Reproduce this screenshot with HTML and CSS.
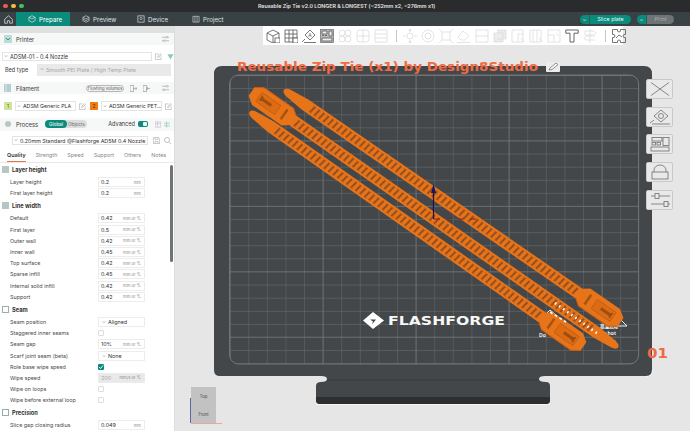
FILE: index.html
```html
<!DOCTYPE html>
<html lang="en">
<head>
<meta charset="utf-8">
<title>Reusable Zip Tie</title>
<link rel="stylesheet" href="styles.css">
</head>
<body>
<div class="app">
  <div class="titlebar">
    <div class="lights"><i class="light red"></i><i class="light yellow"></i><i class="light green"></i></div>
    <div class="title">Reusable Zip Tie v2.0 LONGER &amp; LONGEST (~252mm x2, ~276mm x1)</div>
  </div>
  <div class="tabbar">
    <div class="tab home"><svg width="9" height="9" viewBox="0 0 9 9"><path d="M.7 4.2 4.5.8l3.8 3.4v4H5.6V5.7H3.4v2.5H.7z" fill="none" stroke="#d5d9da" stroke-width=".8"/></svg></div>
    <div class="tab active"><svg width="8" height="8" viewBox="0 0 9 9"><path d="M4.5.8 8 2.6v3.8L4.5 8.2 1 6.4V2.6zM1 2.6l3.5 1.8L8 2.6" fill="none" stroke="#e6f3f1" stroke-width=".7"/></svg>Prepare</div>
    <div class="tab"><svg width="8" height="8" viewBox="0 0 9 9"><path d="M4.5.8 8 2.6v3.8L4.5 8.2 1 6.4V2.6zM1 2.6l3.5 1.8L8 2.6M1 4.5l3.5 1.8L8 4.500" fill="none" stroke="#d5d9da" stroke-width=".7"/></svg>Preview</div>
    <div class="tab"><svg width="8" height="8" viewBox="0 0 9 9"><rect x="1" y="1" width="7" height="7" fill="none" stroke="#d5d9da" stroke-width=".8"/><circle cx="4.5" cy="4" r="1.3" fill="none" stroke="#d5d9da" stroke-width=".7"/></svg>Device</div>
    <div class="tab"><svg width="8" height="8" viewBox="0 0 9 9"><path d="M1 1.500h7v6.500H1zM3.300 1.500V8M5.700 1.500V8" fill="none" stroke="#d5d9da" stroke-width=".7"/></svg>Project</div>
    <div class="actions">
      <div class="action"><span class="drop teal">⌄</span><span class="label teal">Slice plate</span></div>
      <div class="action"><span class="drop teal">⌄</span><span class="label grey">Print</span></div>
    </div>
  </div>
  <div class="main">
    <aside class="side">
      <div class="band"></div>
      <div class="head">
        <svg class="hicon" width="8" height="8" viewBox="0 0 8 8"><rect width="8" height="8" fill="#bcdcd7"/><path d="M2 3l2 2 2-2" stroke="#3f8f85" fill="none"/></svg>
        <span class="htext">Printer</span><span class="spacer"></span>
        <svg class="ticon" width="7" height="8" viewBox="0 0 8 8"><path d="M0 2h8M0 6h8" stroke="#9a9a9a" stroke-width=".7"/><circle cx="5.500" cy="2" r="1" fill="#fff" stroke="#9a9a9a" stroke-width=".6"/><circle cx="2.500" cy="6" r="1" fill="#fff" stroke="#9a9a9a" stroke-width=".6"/></svg>
      </div>
      <div class="row printer">
        <div class="select wide"><span class="chev">⌄</span>ADSM-01 - 0.4 Nozzle</div>
        <svg class="edit" width="7" height="7" viewBox="0 0 8 8"><path d="M7 4v3.500H.5V1H4M3 5l.3-1.300L6.500.7l1 1L4.300 4.700z" fill="none" stroke="#999" stroke-width=".6"/></svg>
        <svg class="wifi" width="7" height="7" viewBox="0 0 8 8"><path d="M.5 1.500h7L4 7.500z" fill="#8ccac1"/></svg>
      </div>
      <div class="row bed">
        <span class="bedlabel">Bed type</span>
        <div class="select bedsel"><span class="chev">⌄</span>Smooth PEI Plate / High Temp Plate</div>
      </div>
      <div class="head filhead">
        <svg class="hicon" width="7" height="8" viewBox="0 0 7 8"><rect width="7" height="8" fill="#b7ccd0"/><path d="M2 0v8" stroke="#fff" stroke-width=".5"/></svg>
        <span class="htext">Filament</span><span class="spacer"></span>
        <span class="pill">Flushing volumes</span>
        <svg class="ticon" width="7" height="7" viewBox="0 0 7 7"><path d="M0 .5h3.500v6H0zM3.500 3.500H7M5.500 2l1.500 1.500L5.500 5" fill="none" stroke="#999" stroke-width=".7"/></svg>
        <svg class="ticon" width="7" height="7" viewBox="0 0 7 7"><path d="M0 .5h3.500v6H0zM3.500 3.500H7M5 2 3.500 3.500 5 5" fill="none" stroke="#999" stroke-width=".7"/></svg>
        <svg class="ticon lastt" width="7" height="8" viewBox="0 0 8 8"><path d="M0 2h8M0 6h8" stroke="#9a9a9a" stroke-width=".7"/><circle cx="5.500" cy="2" r="1" fill="#fff" stroke="#9a9a9a" stroke-width=".6"/><circle cx="2.500" cy="6" r="1" fill="#fff" stroke="#9a9a9a" stroke-width=".6"/></svg>
      </div>
      <div class="row filaments">
        <span class="swatch green">1</span>
        <div class="select fil"><span class="chev">⌄</span>ADSM Generic PLA</div>
        <svg class="edit" width="7" height="7" viewBox="0 0 8 8"><path d="M7 4v3.500H.5V1H4M3 5l.3-1.300L6.500.7l1 1L4.300 4.700z" fill="none" stroke="#999" stroke-width=".6"/></svg>
        <span class="swatch orange">2</span>
        <div class="select fil"><span class="chev">⌄</span>ADSM Generic PET...</div>
        <svg class="edit" width="7" height="7" viewBox="0 0 8 8"><path d="M7 4v3.500H.5V1H4M3 5l.3-1.300L6.500.7l1 1L4.300 4.700z" fill="none" stroke="#999" stroke-width=".6"/></svg>
      </div>
      <div class="head prochead">
        <svg class="hicon picon" width="6" height="6" viewBox="0 0 6 6"><circle cx="3" cy="3" r="3" fill="#bac6c6"/></svg>
        <span class="htext">Process</span>
        <span class="seg"><b>Global</b><span>Objects</span></span>
        <span class="spacer"></span>
        <span class="adv">Advanced</span>
        <span class="toggle"><i></i></span>
        <svg class="ticon" width="6" height="7" viewBox="0 0 7 7"><path d="M.4.4h6.200v6.200H.4zM.4 2.500h6.200M3 .4v6.200" fill="none" stroke="#aab" stroke-width=".5"/></svg>
        <svg class="ticon" width="6" height="7" viewBox="0 0 7 7"><path d="M0 2h7M0 5h7M3 0v7" stroke="#6fb4aa" stroke-width=".6" fill="none"/></svg>
      </div>
      <div class="row preset">
        <div class="select presel"><span class="chev">⌄</span>0.20mm Standard @Flashforge AD5M 0.4 Nozzle</div>
        <svg class="edit" width="7" height="7" viewBox="0 0 7 7"><path d="M.4.4h5l1.200 1.200v5H.4zM2 .4v2h3v-2M2 6.600V4.500h3v2.100" fill="none" stroke="#999" stroke-width=".5"/></svg>
        <svg class="edit" width="7" height="7" viewBox="0 0 7 7"><circle cx="3" cy="3" r="2.500" fill="none" stroke="#999" stroke-width=".6"/><path d="m5 5 2 2" stroke="#999" stroke-width=".6"/></svg>
      </div>
      <nav class="tabs">
        <span class="qt on">Quality</span><span class="qt">Strength</span><span class="qt">Speed</span><span class="qt">Support</span><span class="qt">Others</span><span class="qt">Notes</span>
      </nav>
      <div class="settings">
        <div class="group"><i class="gicon"></i>Layer height</div>
        <div class="set"><span class="lbl">Layer height</span><span class="field"><span>0.2</span><em>mm</em></span></div>
        <div class="set"><span class="lbl">First layer height</span><span class="field"><span>0.2</span><em>mm</em></span></div>
        <div class="group"><i class="gicon"></i>Line width</div>
        <div class="set"><span class="lbl">Default</span><span class="field"><span>0.42</span><em>mm or %</em></span></div>
        <div class="set"><span class="lbl">First layer</span><span class="field"><span>0.5</span><em>mm or %</em></span></div>
        <div class="set"><span class="lbl">Outer wall</span><span class="field"><span>0.42</span><em>mm or %</em></span></div>
        <div class="set"><span class="lbl">Inner wall</span><span class="field"><span>0.45</span><em>mm or %</em></span></div>
        <div class="set"><span class="lbl">Top surface</span><span class="field"><span>0.42</span><em>mm or %</em></span></div>
        <div class="set"><span class="lbl">Sparse infill</span><span class="field"><span>0.45</span><em>mm or %</em></span></div>
        <div class="set"><span class="lbl">Internal solid infill</span><span class="field"><span>0.42</span><em>mm or %</em></span></div>
        <div class="set"><span class="lbl">Support</span><span class="field"><span>0.42</span><em>mm or %</em></span></div>
        <div class="group"><i class="gicon line"></i>Seam</div>
        <div class="set"><span class="lbl">Seam position</span><span class="field"><span><span class="chev">⌄</span>Aligned</span></span></div>
        <div class="set"><span class="lbl">Staggered inner seams</span><span class="check"></span></div>
        <div class="set"><span class="lbl">Seam gap</span><span class="field"><span>10%</span><em>mm or %</em></span></div>
        <div class="set"><span class="lbl">Scarf joint seam (beta)</span><span class="field"><span><span class="chev">⌄</span>None</span></span></div>
        <div class="set"><span class="lbl">Role base wipe speed</span><span class="check on"><svg width="6" height="6" viewBox="0 0 6 6"><path d="m1 3 1.500 1.500L5 1.500" stroke="#fff" fill="none" stroke-width=".9"/></svg></span></div>
        <div class="set"><span class="lbl">Wipe speed</span><span class="field off"><span>200</span><em>mm/s or %</em></span></div>
        <div class="set"><span class="lbl">Wipe on loops</span><span class="check"></span></div>
        <div class="set"><span class="lbl">Wipe before external loop</span><span class="check"></span></div>
        <div class="group"><i class="gicon line"></i>Precision</div>
        <div class="set"><span class="lbl">Slice gap closing radius</span><span class="field"><span>0.049</span><em>mm</em></span></div>
      </div>
      <div class="scroll"></div>
    </aside>
    <section class="canvas">
      <svg class="plate" width="515" height="405" viewBox="175 26 515 405" aria-hidden="true">
        <defs>
          <pattern id="minor" x="229.6" y="75" width="18.6" height="13.1" patternUnits="userSpaceOnUse"><path d="M0 0H18.6M0 0V13.1" fill="none" stroke="#606568" stroke-width="1.200"/></pattern>
          <pattern id="major" x="229.6" y="75" width="93" height="65.4" patternUnits="userSpaceOnUse"><path d="M0 0H93M0 0V65.4" fill="none" stroke="#767a7c" stroke-width="1.200"/></pattern>
          <pattern id="holes" x="0" y="-4" width="5.5" height="8" patternUnits="userSpaceOnUse"><path d="M1 8H3L4.400 0H2.400z" fill="#8f4c1e"/></pattern>
          <g id="head">
            <path d="M-25 -6-19-10.500H17L25 -5V5L17 10.500H-19L-25 6z" fill="#e8741a"/>
            <path d="M-25 6-19 10.500H17L25 5" fill="none" stroke="#c85f12" stroke-width="1"/>
            <rect x="-16" y="-6" width="2.500" height="12" fill="#a5540f"/>
            <rect x="-7" y="-5.500" width="23" height="11" fill="#dd6b14" stroke="#b85a10" stroke-width=".7"/>
            <path d="M1 -1.500H11L14 -3.500V3.500L11 1.500H1z" fill="#9c4f14"/>
          </g>
        </defs>
        <path d="M222 66H644Q652 66 652 74V370Q652 376 646 376H545Q539 376 539 379T546 382Q550 382 550 386V400Q550 404 546 404H320Q316 404 316 400V386Q316 382 321 382Q327 382 327 379T321 376H220Q214 376 214 370V74Q214 66 222 66Z" fill="#43474a"/>
        <path d="M316 397H550V400Q550 404 546 404H320Q316 404 316 400Z" fill="#2c2e2f"/>
        <path d="M327 380H539" stroke="#3a3d3f" stroke-width="1"/>
        <path d="M646 376.500Q652.500 376.500 652.500 370M316 404.500H550" fill="none" stroke="#fafafa" stroke-width=".7"/>
        <rect x="229.6" y="75" width="409" height="289" rx="9" fill="url(#minor)"/>
        <rect x="229.6" y="75" width="409" height="289" rx="9" fill="url(#major)"/>
        <rect x="229.6" y="75" width="409" height="289" rx="9" fill="none" stroke="#7e8284" stroke-width=".8"/>

        <path class="decal-line" d="M616 326l5-6 6 6z"/>
        <path class="decal-line" d="M545 315l5-5 6 5z"/>
        <text class="decal" x="539" y="336.500">Do</text>
        <text class="decal" x="600" y="334.500">ng hot</text>
        <text class="decal small" x="600" y="328">高温危险</text>
        <text class="decal" x="610" y="342.500">ce</text>

        <g transform="translate(600 308) rotate(34.600)">
          <path d="M-384 0Q-384-3-378-4L-358-6H-20V6H-358L-378 4Q-384 3-384 0Z" fill="#e8741a"/>
          <rect x="-352" y="-4" width="325" height="8" fill="url(#holes)"/>
          <use href="#head"/>
        </g>
        <g transform="translate(272 106) rotate(214.900)">
          <path d="M-422 0Q-422-3-416-4L-396-6H-20V6H-396L-416 4Q-422 3-422 0Z" fill="#e8741a"/>
          <rect x="-390" y="-4" width="363" height="8" fill="url(#holes)"/>
          <use href="#head"/>
        </g>
        <g transform="translate(563 332) rotate(35.100)">
          <path d="M-383 0Q-383-3-377-4L-357-6H-20V6H-357L-377 4Q-383 3-383 0Z" fill="#e8741a"/>
          <rect x="-351" y="-4" width="324" height="8" fill="url(#holes)"/>
          <use href="#head"/>
        </g>
        <path d="M555 303 598 334" fill="none" stroke="#fff" stroke-width="2.500" stroke-dasharray="1.500 3.500"/>
        <path d="M550 312 566 322" fill="none" stroke="#fff" stroke-width="1.500" stroke-dasharray="3 2.500"/>

        <path d="M433.500 192V219" stroke="#241045" stroke-width="1.300"/>
        <path d="M433.500 184l-2.500 9h5z" fill="#15176b"/>
        <path d="M434 219H483" stroke="#8c1c22" stroke-width="1" stroke-dasharray="6 6"/>

        <path d="M363 320.500 373 312 384 320.500 373 329z" fill="#fff"/>
        <path d="M370 319.500h6l-4 5 1-3z" fill="#43474a"/>
        <text class="brand" x="388" y="325" textLength="117" lengthAdjust="spacingAndGlyphs">FLASHFORGE</text>
        <text class="plate-no" x="647" y="358" textLength="21" lengthAdjust="spacingAndGlyphs">01</text>
        <text class="model-title" x="237" y="71" textLength="301" lengthAdjust="spacingAndGlyphs">Reusable Zip Tie (x1) by Design8Studio</text>
        <rect x="546" y="62" width="14" height="10" rx="1" fill="#ececec"/>
        <path d="M549 70l1-2 6-5 2 1.500-6 5z" fill="#f7f7f7" stroke="#666" stroke-width=".7"/>
      </svg>

      <div class="toolbar">
        <svg class="ti dk" viewBox="0 0 14 14"><path d="M1 4l6-3 6 3v7l-6 3-6-3zM1 4l6 3 6-3M7 7v7"/><rect x="9" y="9" width="5" height="5" fill="#fff"/></svg>
        <svg class="ti dk" viewBox="0 0 14 14"><path d="M1 1h12v12H1zM1 5h12M1 9h12M5 1v12M9 1v12"/><rect x="9" y="9" width="5" height="5" fill="#fff"/></svg>
        <svg class="ti dk" viewBox="0 0 14 14"><path d="M3 6l5-5 5 5-5 5zM0 13l3-3M2 13.500h12"/><text class="ti-a" x="6.300" y="7.800">A</text></svg>
        <svg class="ti dk" viewBox="0 0 14 14"><rect x=".5" y=".5" width="13" height="13" fill="#bdbdbd" stroke="#777"/><path d="M2 2h5v3H2zM2 6.500h2M5 6.500h2M9 2h3v5H9zM2 9h10v3H2z" fill="#eee"/></svg>
        <svg class="ti di" viewBox="0 0 14 14"><circle cx="4" cy="4" r="3"/><circle cx="10" cy="4" r="3"/><circle cx="4" cy="10" r="3"/><circle cx="10" cy="10" r="3"/></svg>
        <svg class="ti di" viewBox="0 0 14 14"><rect x="1" y="1" width="12" height="12" rx="3"/><path d="M1 7h12M7 1v12"/></svg>
        <svg class="ti di last" viewBox="0 0 14 14"><path d="M1 1h12v12H1zM1 5h12M1 9h12"/></svg>
        <span class="tsep"></span>
        <svg class="ti di" viewBox="0 0 14 14"><circle cx="7" cy="7" r="3"/><path d="M7 0v3M7 11v3M0 7h3M11 7h3M7 0 6 1.500h2zM7 14l-1-1.500h2z"/></svg>
        <svg class="ti di" viewBox="0 0 14 14"><circle cx="7" cy="7" r="6"/><circle cx="7" cy="7" r="3"/></svg>
        <svg class="ti di" viewBox="0 0 14 14"><path d="M3 3h8v8H3zM0 0l3 3M14 0l-3 3M0 14l3-3M14 14l-3-3"/></svg>
        <svg class="ti di" viewBox="0 0 14 14"><path d="M1 8l5-6 6 5-4 4H4zM0 13.500h13"/></svg>
        <svg class="ti di" viewBox="0 0 14 14"><path d="M1 1h12v12H1zM1 7h12"/></svg>
        <svg class="ti di" viewBox="0 0 14 14"><path d="M1 4h9v9H1zM4 1h9v9H4" fill="#ececec"/></svg>
        <svg class="ti di" viewBox="0 0 14 14"><path d="M1 1h11v12H1zM7 5v8M7 5h5M10 9l3 4"/></svg>
        <svg class="ti di" viewBox="0 0 14 14"><path d="M1 1h11v12H1zM4 1v12M8 1v12M10 9l3 4"/></svg>
        <svg class="ti di" viewBox="0 0 14 14"><path d="M1 1h12v12H1zM1 6h6v7M9 4l3 3"/></svg>
        <svg class="ti gt" viewBox="0 0 14 14"><path d="M.8 1h12.400v3.200H9V13H5V4.200H.8z"/></svg>
        <svg class="ti di last" viewBox="0 0 14 14"><path d="M7 0v14M2 2h9l2 2-2 2H2zM12 7H3L1 9l2 2h9"/></svg>
        <span class="tsep"></span>
        <svg class="ti dk" viewBox="0 0 14 14"><path d="M.5.5h5Q5 3 7 3t1.500-2.500h5v5q-2.500-.5-2.500 1.500t2.500 1.500v5h-5Q9 11 7 11t-1.500 2.500h-5v-5Q3 9 3 7T.5 5.500zM4 9l3-3 3 2"/></svg>
      </div>

      <div class="side-tools">
        <div class="st"><svg width="20" height="14" viewBox="0 0 20 14"><path d="M1 .5l18 13M19 .5 1 13.500" stroke="#6d6d6d" stroke-width=".8" fill="none"/></svg></div>
        <div class="st"><svg width="22" height="16" viewBox="0 0 22 16" fill="none" stroke="#6d6d6d" stroke-width=".8"><path d="M5 7l7-6 7 6-7 6zM1 14l4-3M3 15h18"/><circle cx="12" cy="7" r="2.500"/></svg></div>
        <div class="st"><svg width="22" height="16" viewBox="0 0 22 16" fill="none" stroke="#6d6d6d" stroke-width=".8"><rect x="3" y="1.500" width="10" height="3.500"/><rect x="3" y="6.500" width="3.500" height="2.500"/><rect x="8" y="6.500" width="3.500" height="2.500"/><rect x="14" y="1.500" width="6" height="8"/><rect x="2" y="11" width="18" height="4"/></svg></div>
        <div class="st"><svg width="22" height="16" viewBox="0 0 22 16" fill="none" stroke="#6d6d6d" stroke-width=".8"><path d="M5 8V6a6 5 0 0 1 12 0v2"/><rect x="3" y="8" width="16" height="7"/></svg></div>
        <div class="st"><svg width="22" height="16" viewBox="0 0 22 16" fill="none" stroke="#6d6d6d" stroke-width=".8"><path d="M2 4h4M10 4h11M2 12h13M19 12h2"/><rect x="6" y="1.500" width="4" height="5"/><rect x="15" y="9.500" width="4" height="5"/></svg></div>
      </div>
      <div class="cube">
        <div class="cube-face"><span>Top</span><span>Front</span></div>
        <i class="axis-y"></i><i class="axis-x"></i>
      </div>
    </section>
  </div>
</div>
</body>
</html>
```

FILE: styles.css
```css
* { box-sizing: border-box; }
html, body { margin: 0; height: 100%; overflow: hidden; }
body { font-family: "Inter", "Noto Sans", "Liberation Sans", sans-serif; color: #3a3a3a; background: #e6e6e6; }
.app { width: 690px; height: 431px; display: flex; flex-direction: column; overflow: hidden; }

.titlebar { height: 12px; background: #2a2b2c; display: flex; align-items: center; flex: none; }
.lights { display: flex; gap: 3.500px; padding-left: 3px; width: 0; }
.light { width: 4.500px; height: 4.500px; border-radius: 50%; display: block; flex: none; }
.red { background: #ee5b56; } .yellow { background: #f4bb3d; } .green { background: #45c34c; }
.title { flex: 1; text-align: center; color: #e3e4e4; font-size: 5.300px; font-weight: 600; white-space: nowrap; }

.tabbar { height: 14px; background: #394144; display: flex; align-items: stretch; flex: none; color: #dfe3e3; font-size: 6.200px; }
.tab { display: flex; align-items: center; gap: 3px; width: 55px; padding-left: 12px; }
.tab svg { flex: none; }
.home { width: 16px; padding-left: 4px; }
.active { background: #0a8b7b; color: #f0f7f6; font-weight: 500; width: 54px; }
.actions { margin-left: auto; display: flex; gap: 6px; align-items: center; padding-right: 16px; }
.action { display: flex; height: 9px; font-size: 5.400px; align-items: center; }
.drop { width: 10px; height: 9px; border-radius: 5px 0 0 5px; display: flex; align-items: center; justify-content: center; font-size: 5px; line-height: 5px; border-right: 1px solid #2d5f59; }
.label { height: 9px; border-radius: 0 5px 5px 0; display: flex; align-items: center; justify-content: center; }
.teal { background: #0a8b7b; color: #eef7f6; }
.action:first-child .label { width: 41px; }
.grey { background: #6e7476; color: #a8adae; width: 27px; }

.main { flex: 1; display: flex; min-height: 0; }
.side { width: 175px; background: #fff; position: relative; flex: none; font-size: 5.700px; border-right: 1px solid #dcdcdc; overflow: hidden; }
.band { height: 7px; background: #dfe0e0; }
.head { display: flex; align-items: center; height: 12px; background: #f6f7f7; padding: 0 5px 0 4px; gap: 4px; }
.hicon { flex: none; }
.htext { font-size: 5.800px; color: #3a3a3a; }
.spacer { flex: 1; }
.ticon { flex: none; }
.row { display: flex; align-items: center; }
.select { height: 9px; border: 1px solid #e4e4e4; background: #fff; display: flex; align-items: center; color: #333; white-space: nowrap; overflow: hidden; font-size: 5.500px; }
.chev { color: #888; margin: 0 2px 0 1px; font-size: 5px; line-height: 5px; position: relative; top: -1px; }
.printer { height: 13px; padding-left: 2px; gap: 3px; margin-top: 5px; }
.wide { width: 150px; }
.edit { flex: none; }
.wifi { flex: none; margin-left: 2px; }
.bed { height: 13px; padding-left: 5px; gap: 8px; }
.bedlabel { font-size: 5.500px; width: 24px; white-space: nowrap; }
.bedsel { flex: none; width: 134px; height: 12px; background: #e9e9e9; border-color: #e9e9e9; color: #a8a8a8; padding-left: 1px; font-size: 5.400px; }
.filhead { margin-top: 6px; gap: 6px; padding-left: 4px; }
.filhead .hicon { margin-right: -1px; }
.pill { border: 1px solid #b5b5b5; background: #f2f2f2; border-radius: 4px; height: 7px; width: 38px; font-size: 4.200px; display: flex; align-items: center; justify-content: center; color: #555; white-space: nowrap; }
.lastt { margin-left: 6px; }
.filaments { height: 11px; padding-left: 4px; margin-top: 6.500px; gap: 3px; }
.swatch { width: 8px; height: 8px; font-size: 5px; display: flex; align-items: center; justify-content: center; flex: none; }
.swatch.green { background: #cfe49a; color: #55681f; }
.swatch.orange { background: #f07d13; color: #5d2e00; margin-left: 1px; }
.fil { width: 61px; height: 10px; font-size: 5.300px; }
.prochead { margin-top: 6.500px; gap: 3px; padding-left: 5px; padding-right: 4px; height: 12.500px; }
.picon { margin-right: 2px; }
.seg { display: flex; align-items: center; height: 8px; background: #dcdedd; border-radius: 4px; margin-left: 4px; font-size: 4.600px; color: #6a6a6a; width: 42px; }
.seg b { background: #0a8b7b; color: #e9f6f4; font-weight: 500; border-radius: 4px; height: 8px; width: 22px; display: flex; align-items: center; justify-content: center; }
.seg span { padding-left: 1px; }
.adv { font-size: 5.600px; }
.toggle { width: 10px; height: 6px; background: #0a8b7b; border-radius: 2px; position: relative; margin-right: 4px; }
.toggle i { position: absolute; right: 1px; top: 1px; width: 4px; height: 4px; background: #e8f5f3; border-radius: 1px; }
.preset { height: 10px; margin-top: 5px; padding-left: 12px; gap: 5px; }
.presel { width: 136px; font-size: 5.400px; }
.preset .edit:last-child { margin-left: -1px; }
.tabs { display: flex; height: 14px; margin-top: 3px; border-bottom: 1px solid #e8e8e8; font-size: 5.400px; padding-left: 7px; color: #888; align-items: center; }
.qt { margin-right: 10px; white-space: nowrap; height: 14px; display: flex; align-items: center; }
.on { color: #333; font-weight: 600; border-bottom: 1px solid #e8744b; }
.group { display: flex; align-items: center; height: 14px; font-size: 5.700px; font-weight: 700; color: #333; padding-left: 2px; gap: 3px; }
.gicon { width: 7px; height: 7px; background: #b5c6c4; display: block; flex: none; }
.gicon.line { background: #fff; border: 1px solid #97aeab; }
.set { display: flex; align-items: center; height: 11.200px; padding-left: 10px; }
.lbl { width: 88px; color: #4a4a4a; font-size: 5.400px; white-space: nowrap; }
.field { width: 47px; height: 10px; border: 1px solid #ececec; background: #fff; display: flex; align-items: center; justify-content: space-between; padding: 0 3px 0 2px; color: #333; font-size: 5.400px; }
.field em { font-style: normal; color: #8c8c8c; font-size: 4.200px; }
.field.off { background: #e9e9e9; color: #aaa; }
.check { width: 6px; height: 6px; border: 1px solid #dedede; border-radius: 1px; display: flex; background: #fff; }
.check.on { background: #0a8b7b; border: 0; align-items: center; justify-content: center; }
.scroll { position: absolute; left: 170px; top: 139px; width: 3px; height: 97px; background: #6f7476; border-radius: 2px; }

.canvas { flex: 1; position: relative; background: #e6e6e6; min-width: 0; overflow: hidden; }
.plate { position: absolute; left: 0; top: 0; }
.decal { font-family: "Noto Sans", sans-serif; font-weight: 600; font-size: 5px; fill: #fff; }
.decal.small { font-family: "Noto Sans CJK SC", sans-serif; font-size: 4.500px; }
.decal-line { fill: none; stroke: #fff; stroke-width: .9; }
.brand { font-family: "DejaVu Sans", sans-serif; font-weight: 700; font-size: 12.300px; fill: #f7f7f7; }
.plate-no { font-family: "DejaVu Sans", sans-serif; font-weight: 700; font-size: 13.500px; fill: #ee6a45; }
.model-title { font-family: "DejaVu Sans", sans-serif; font-weight: 700; font-size: 11.500px; fill: #ef6c44; }

.toolbar { position: absolute; left: 88px; top: 0; height: 19px; width: 360px; display: flex; align-items: center; gap: 4px; background: #fff; padding-left: 3px; }
.ti { width: 14px; height: 14px; flex: none; fill: none; stroke-width: .8; }
.dk { stroke: #555; }
.di { stroke: #dcdcdc; }
.gt { stroke: #666; fill: #fff; stroke-width: 1; }
.ti.last { margin-right: 4px; }
.ti-a { font-size: 5px; fill: #555; stroke: none; font-family: "Liberation Sans", sans-serif; }
.tsep { width: 1px; height: 12px; background: #c9c9c9; flex: none; margin-right: 2px; }

.side-tools { position: absolute; left: 471px; top: 53px; display: flex; flex-direction: column; gap: 7.700px; }
.st { width: 27px; height: 20px; background: #e9e9e9; border: 1px solid #c9c9c9; border-radius: 2px; display: flex; align-items: center; justify-content: center; }
.cube { position: absolute; left: 15px; top: 361px; width: 34px; height: 37px; }
.cube-face { width: 25px; height: 36px; background: #c2c2c2; display: flex; flex-direction: column; justify-content: space-around; align-items: center; font-size: 4.200px; color: #444; position: relative; left: 1px; }
.axis-y { position: absolute; left: 0; top: 11px; width: 1px; height: 25px; background: #5c6aa0; }
.axis-x { position: absolute; left: 1px; top: 36px; width: 31px; height: 1px; background: #e9a6a6; }
```
